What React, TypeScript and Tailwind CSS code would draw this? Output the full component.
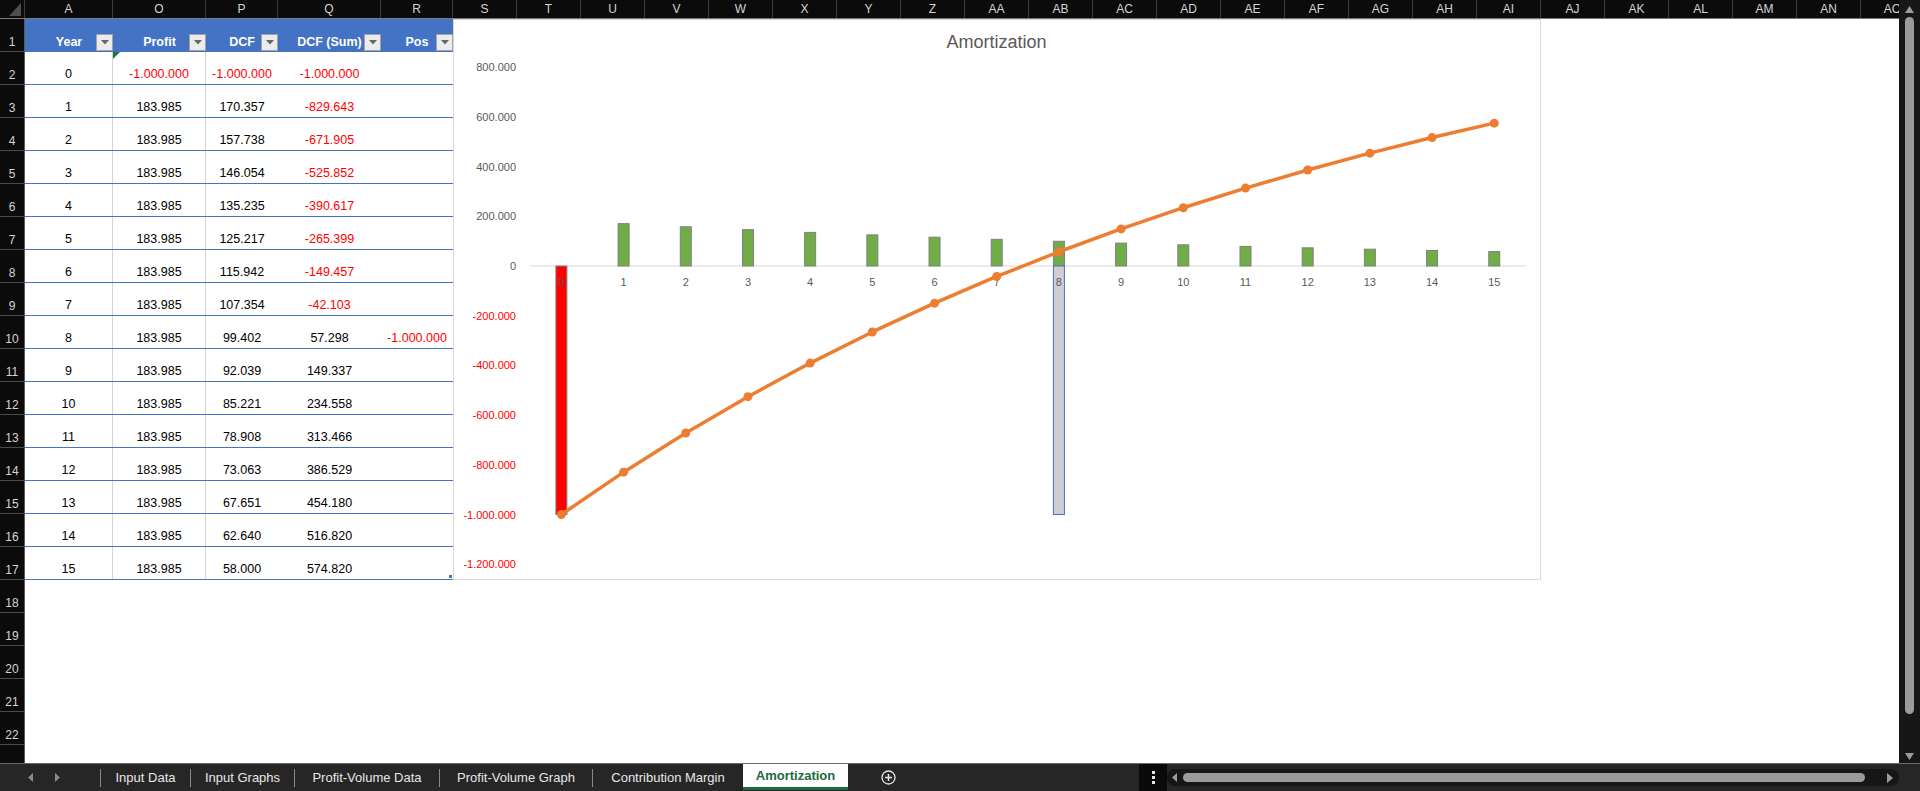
const sheetCols = [
  { l: 'A', w: 'w-[88px]' },
  { l: 'O', w: 'w-[93px]' },
  { l: 'P', w: 'w-[72px]' },
  { l: 'Q', w: 'w-[103px]' },
  { l: 'R', w: 'w-[72px]' },
  ...['S', 'T', 'U', 'V', 'W', 'X', 'Y', 'Z', 'AA', 'AB', 'AC', 'AD', 'AE', 'AF', 'AG', 'AH', 'AI', 'AJ', 'AK', 'AL', 'AM', 'AN', 'AO'].map(
    (l) => ({ l, w: 'w-[64px]' })
  ),
];

// table column widths (A, O, P, Q, R)
const tableW = ['w-[88px]', 'w-[93px]', 'w-[72px]', 'w-[103px]', 'w-[72px]'];
const heads = ['Year', 'Profit', 'DCF', 'DCF (Sum)', 'Pos'];

const rows: string[][] = [
  ['0', '-1.000.000', '-1.000.000', '-1.000.000', ''],
  ['1', '183.985', '170.357', '-829.643', ''],
  ['2', '183.985', '157.738', '-671.905', ''],
  ['3', '183.985', '146.054', '-525.852', ''],
  ['4', '183.985', '135.235', '-390.617', ''],
  ['5', '183.985', '125.217', '-265.399', ''],
  ['6', '183.985', '115.942', '-149.457', ''],
  ['7', '183.985', '107.354', '-42.103', ''],
  ['8', '183.985', '99.402', '57.298', '-1.000.000'],
  ['9', '183.985', '92.039', '149.337', ''],
  ['10', '183.985', '85.221', '234.558', ''],
  ['11', '183.985', '78.908', '313.466', ''],
  ['12', '183.985', '73.063', '386.529', ''],
  ['13', '183.985', '67.651', '454.180', ''],
  ['14', '183.985', '62.640', '516.820', ''],
  ['15', '183.985', '58.000', '574.820', ''],
];

// values in thousands, for the chart
const dcf = [-1000, 170.357, 157.738, 146.054, 135.235, 125.217, 115.942, 107.354, 99.402, 92.039, 85.221, 78.908, 73.063, 67.651, 62.64, 58];
const cum = [-1000, -829.643, -671.905, -525.852, -390.617, -265.399, -149.457, -42.103, 57.298, 149.337, 234.558, 313.466, 386.529, 454.18, 516.82, 574.82];
const ticks = [
  { v: 800, t: '800.000' },
  { v: 600, t: '600.000' },
  { v: 400, t: '400.000' },
  { v: 200, t: '200.000' },
  { v: 0, t: '0' },
  { v: -200, t: '-200.000' },
  { v: -400, t: '-400.000' },
  { v: -600, t: '-600.000' },
  { v: -800, t: '-800.000' },
  { v: -1000, t: '-1.000.000' },
  { v: -1200, t: '-1.200.000' },
];

const cx = (i: number) => 108.4 + 62.19 * i;
const cy = (k: number) => 247 - 0.2485 * k;

function FilterBtn() {
  return (
    <div className="absolute right-0 bottom-[1px] w-[17px] h-[17px] bg-[#ececec] border border-[#a3a3a3] flex items-center justify-center">
      <svg width="8" height="5" viewBox="0 0 8 5">
        <polygon points="0,0 8,0 4,4.5" fill="#666" />
      </svg>
    </div>
  );
}

function Chart() {
  const line = cum.map((v, i) => `${cx(i)},${cy(v)}`).join(' ');
  return (
    <svg width="1088" height="561" viewBox="0 0 1088 561" className="shrink-0">
      <rect x="0.5" y="0.5" width="1087" height="560" fill="#fff" stroke="#d9d9d9" />
      <text x="543.5" y="29" textAnchor="middle" fontSize="18" fill="#595959">Amortization</text>
      {ticks.map((t) => (
        <text key={t.v} x="63" y={cy(t.v) + 4} textAnchor="end" fontSize="11" fill={t.v < 0 ? '#ff0000' : '#595959'}>
          {t.t}
        </text>
      ))}
      <line x1="77" y1="247" x2="1073" y2="247" stroke="#d9d9d9" strokeWidth="1" />
      {dcf.map((v, i) => (
        <rect
          key={i}
          x={cx(i) - 5.5}
          y={v < 0 ? 247 : cy(v)}
          width="11"
          height={Math.abs(cy(v) - 247)}
          fill={v < 0 ? '#ff0000' : '#70ad47'}
          stroke="#7f7f7f"
          strokeWidth="1"
        />
      ))}
      <rect x={cx(8) - 5.5} y="247" width="11" height={cy(-1000) - 247} fill="#d0cece" stroke="#4472c4" strokeWidth="1" />
      {dcf.map((_, i) => (
        <text key={i} x={cx(i)} y="267" textAnchor="middle" fontSize="11" fill="#595959">
          {i}
        </text>
      ))}
      <polyline points={line} fill="none" stroke="#ed7d31" strokeWidth="3.5" strokeLinejoin="round" strokeLinecap="round" />
      {cum.map((v, i) => (
        <circle key={i} cx={cx(i)} cy={cy(v)} r="4.5" fill="#ed7d31" />
      ))}
    </svg>
  );
}

function Table() {
  return (
    <div className="w-[428px] shrink-0">
      <div className="flex h-[33px] bg-[#4472c4] text-white font-bold">
        {heads.map((h, i) => (
          <div key={h} className={`${tableW[i]} relative flex items-end justify-center pb-[3px] leading-[14px]`}>
            {h}
            <FilterBtn />
          </div>
        ))}
      </div>
      {rows.map((r, ri) => (
        <div key={ri} className="flex h-[33px] border-b border-[#4472c4] relative">
          {r.map((c, ci) => (
            <div
              key={ci}
              className={`${tableW[ci]} relative flex items-end justify-center pb-[3px] leading-[14px] ${
                ci < 2 ? 'border-r border-[#d4d4d4]' : ''
              } ${c.startsWith('-') ? 'text-[#ff0000]' : 'text-black'}`}
            >
              {ri === 0 && ci === 1 && (
                <svg width="7" height="7" className="absolute left-0 top-0">
                  <polygon points="0,0 7,0 0,7" fill="#1e7a3c" />
                </svg>
              )}
              {c}
            </div>
          ))}
          {ri === rows.length - 1 && <div className="absolute right-[1px] bottom-[1px] w-[3px] h-[3px] bg-[#4472c4]" />}
        </div>
      ))}
    </div>
  );
}

function VScroll() {
  return (
    <div className="w-[21px] bg-[#171717] flex flex-col items-center pt-[6px] pb-[3px]">
      <svg width="9" height="7" viewBox="0 0 9 7">
        <polygon points="0,7 9,7 4.5,0" fill="#9b9b9b" />
      </svg>
      <div className="mt-[4px] w-[9px] h-[697px] rounded-full bg-[#9b9b9b]" />
      <div className="flex-1" />
      <svg width="9" height="7" viewBox="0 0 9 7">
        <polygon points="0,0 9,0 4.5,7" fill="#9b9b9b" />
      </svg>
    </div>
  );
}

const tabs = [
  { t: 'Input Data', w: 'w-[89px]' },
  { t: 'Input Graphs', w: 'w-[103px]' },
  { t: 'Profit-Volume Data', w: 'w-[144px]' },
  { t: 'Profit-Volume Graph', w: 'w-[152px]' },
  { t: 'Contribution Margin', w: 'w-[150px]' },
];

function TabBar() {
  return (
    <div className="h-[28px] bg-[#262626] border-t border-[#6a6a6a] flex text-[13px] text-[#e6e6e6]">
      <div className="w-[100px] flex items-center">
        <svg width="5" height="9" viewBox="0 0 5 9" className="ml-[28px]">
          <polygon points="5,0 5,9 0,4.5" fill="#8a8a8a" />
        </svg>
        <svg width="5" height="9" viewBox="0 0 5 9" className="ml-[22px]">
          <polygon points="0,0 0,9 5,4.5" fill="#8a8a8a" />
        </svg>
      </div>
      {tabs.map((t, i) => (
        <div key={t.t} className="flex items-center">
          {i < tabs.length && <div className="w-px h-[18px] bg-[#8a8a8a]" />}
          <div className={`${t.w} text-center leading-[16px]`}>{t.t}</div>
        </div>
      ))}
      <div className="w-[105px] h-[26px] bg-white text-[#1d6b3e] font-bold flex items-center justify-center border-b-[3px] border-[#1d6b3e]">
        Amortization
      </div>
      <div className="flex items-center ml-[33px]">
        <svg width="15" height="15" viewBox="0 0 15 15">
          <circle cx="7.5" cy="7.5" r="6.5" fill="none" stroke="#e6e6e6" strokeWidth="1.3" />
          <path d="M7.5 4v7M4 7.5h7" stroke="#e6e6e6" strokeWidth="1.5" />
        </svg>
      </div>
      <div className="flex-1" />
      <div className="w-[28px] bg-[#0a0a0a] flex items-center justify-center">
        <svg width="3" height="13" viewBox="0 0 3 13">
          <rect x="0" y="0" width="3" height="3" fill="#e6e6e6" />
          <rect x="0" y="5" width="3" height="3" fill="#e6e6e6" />
          <rect x="0" y="10" width="3" height="3" fill="#e6e6e6" />
        </svg>
      </div>
      <div className="w-[732px] flex items-center">
        <div className="w-[732px] h-[17px] bg-[#161616] rounded-[8px] flex items-center px-[5px]">
          <svg width="5" height="9" viewBox="0 0 5 9">
            <polygon points="5,0 5,9 0,4.5" fill="#9b9b9b" />
          </svg>
          <div className="ml-[6px] w-[682px] h-[9px] rounded-full bg-[#9b9b9b]" />
          <div className="flex-1" />
          <svg width="6" height="10" viewBox="0 0 6 10" className="mr-[1px]">
            <polygon points="0,0 0,10 6,5" fill="#9b9b9b" />
          </svg>
        </div>
      </div>
      <div className="w-[21px]" />
    </div>
  );
}

export default function App() {
  return (
    <div className="w-[1920px] h-[791px] overflow-hidden bg-black flex flex-col font-['Liberation_Sans',Arial,sans-serif] text-[12.5px]">
      <div className="h-[763px] flex">
        <div className="w-[1899px] flex flex-col overflow-hidden">
          {/* column letters */}
          <div className="h-[19px] flex shrink-0 bg-[#0b0b0b] border-b border-[#7a7a7a] text-[12px] text-[#d4d4d4]">
            <div className="w-[25px] shrink-0 border-r border-[#3c3c3c] flex items-end justify-end pr-[3px] pb-[2px]">
              <svg width="12" height="13" viewBox="0 0 12 13">
                <polygon points="0,13 12,13 12,0" fill="#4e4e4e" />
              </svg>
            </div>
            {sheetCols.map((c) => (
              <div key={c.l} className={`${c.w} shrink-0 border-r border-[#3c3c3c] flex items-center justify-center leading-[18px]`}>
                {c.l}
              </div>
            ))}
          </div>
          <div className="flex-1 flex">
            {/* row numbers */}
            <div className="w-[25px] shrink-0 bg-[#0b0b0b] border-r border-[#5a5a5a] text-[12px] text-[#d4d4d4]">
              {Array.from({ length: 22 }, (_, i) => (
                <div key={i} className="h-[33px] border-b border-[#4a4a4a] flex items-end justify-center pb-[2px] leading-[14px]">
                  {i + 1}
                </div>
              ))}
            </div>
            <div className="flex-1 bg-white flex items-start">
              <Table />
              <Chart />
            </div>
          </div>
        </div>
        <VScroll />
      </div>
      <TabBar />
    </div>
  );
}
